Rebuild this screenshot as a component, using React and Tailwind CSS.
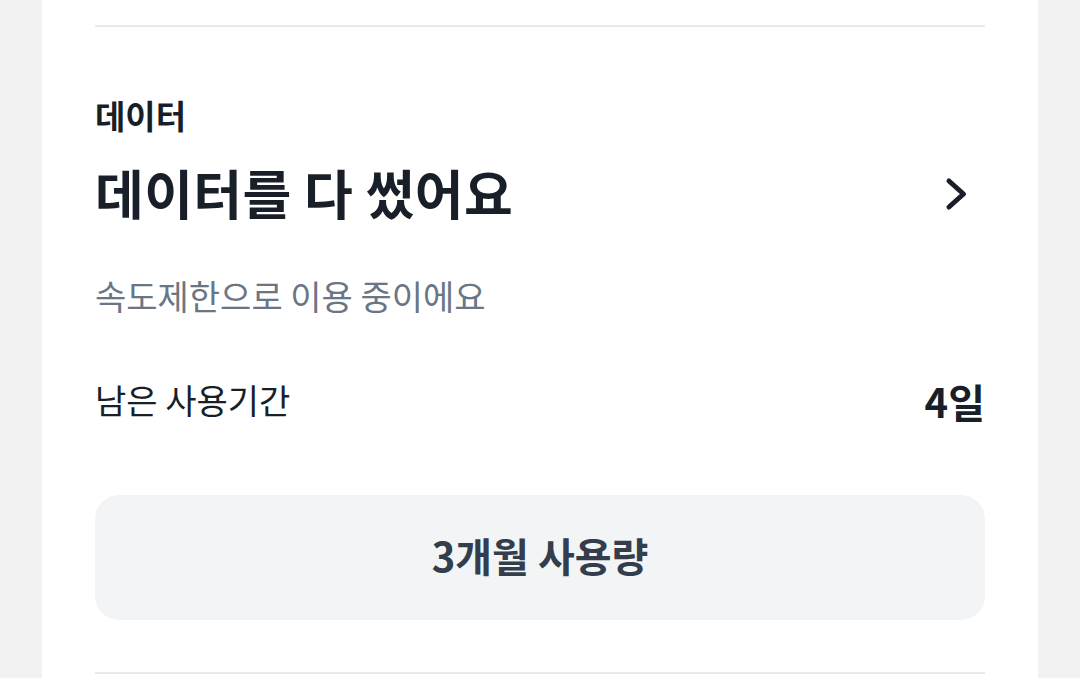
import React from 'react';

const font = { fontFamily: '"Noto Sans CJK KR", "Noto Sans", sans-serif' };

function Chevron() {
  return (
    <svg width="40" height="40" viewBox="0 0 40 40" fill="none" className="mr-[5px] -mt-[2px]">
      <path d="M9 8 L23.5 21 L9 34" stroke="#191f28" strokeWidth="5" strokeLinecap="round" strokeLinejoin="round" />
    </svg>
  );
}

export default function App() {
  return (
    <div className="min-h-screen bg-[#f2f2f2] flex justify-center" style={font}>
      <div className="w-[996px] bg-white px-[53px] pt-[25px] pb-[4px]">
        <div className="h-[2px] bg-[#e8eaed]" />

        <div className="mt-[68px] text-[33px] leading-[40px] font-semibold text-[#191f28]">데이터</div>

        <div className="mt-[29px] flex items-center justify-between h-[60px]">
          <h1 className="text-[53px] leading-[60px] font-bold text-[#191f28] tracking-[0.4px] -mt-[4px]">데이터를 다 썼어요</h1>
          <Chevron />
        </div>

        <p className="mt-[52px] text-[34px] leading-[40px] text-[#6b7684]">속도제한으로 이용 중이에요</p>

        <div className="mt-[64px] flex items-center justify-between h-[40px]">
          <span className="text-[34px] leading-[40px] text-[#191f28]">남은 사용기간</span>
          <span className="text-[40px] leading-[40px] font-bold text-[#191f28] mt-[2px]">4일</span>
        </div>

        <button className="mt-[75px] w-full h-[125px] rounded-[24px] bg-[#f2f4f6] text-[40px] font-bold text-[#333d4b]">
          <span className="relative -top-[3px]">3개월 사용량</span>
        </button>

        <div className="mt-[52px] h-[2px] bg-[#e8eaed]" />
      </div>
    </div>
  );
}
